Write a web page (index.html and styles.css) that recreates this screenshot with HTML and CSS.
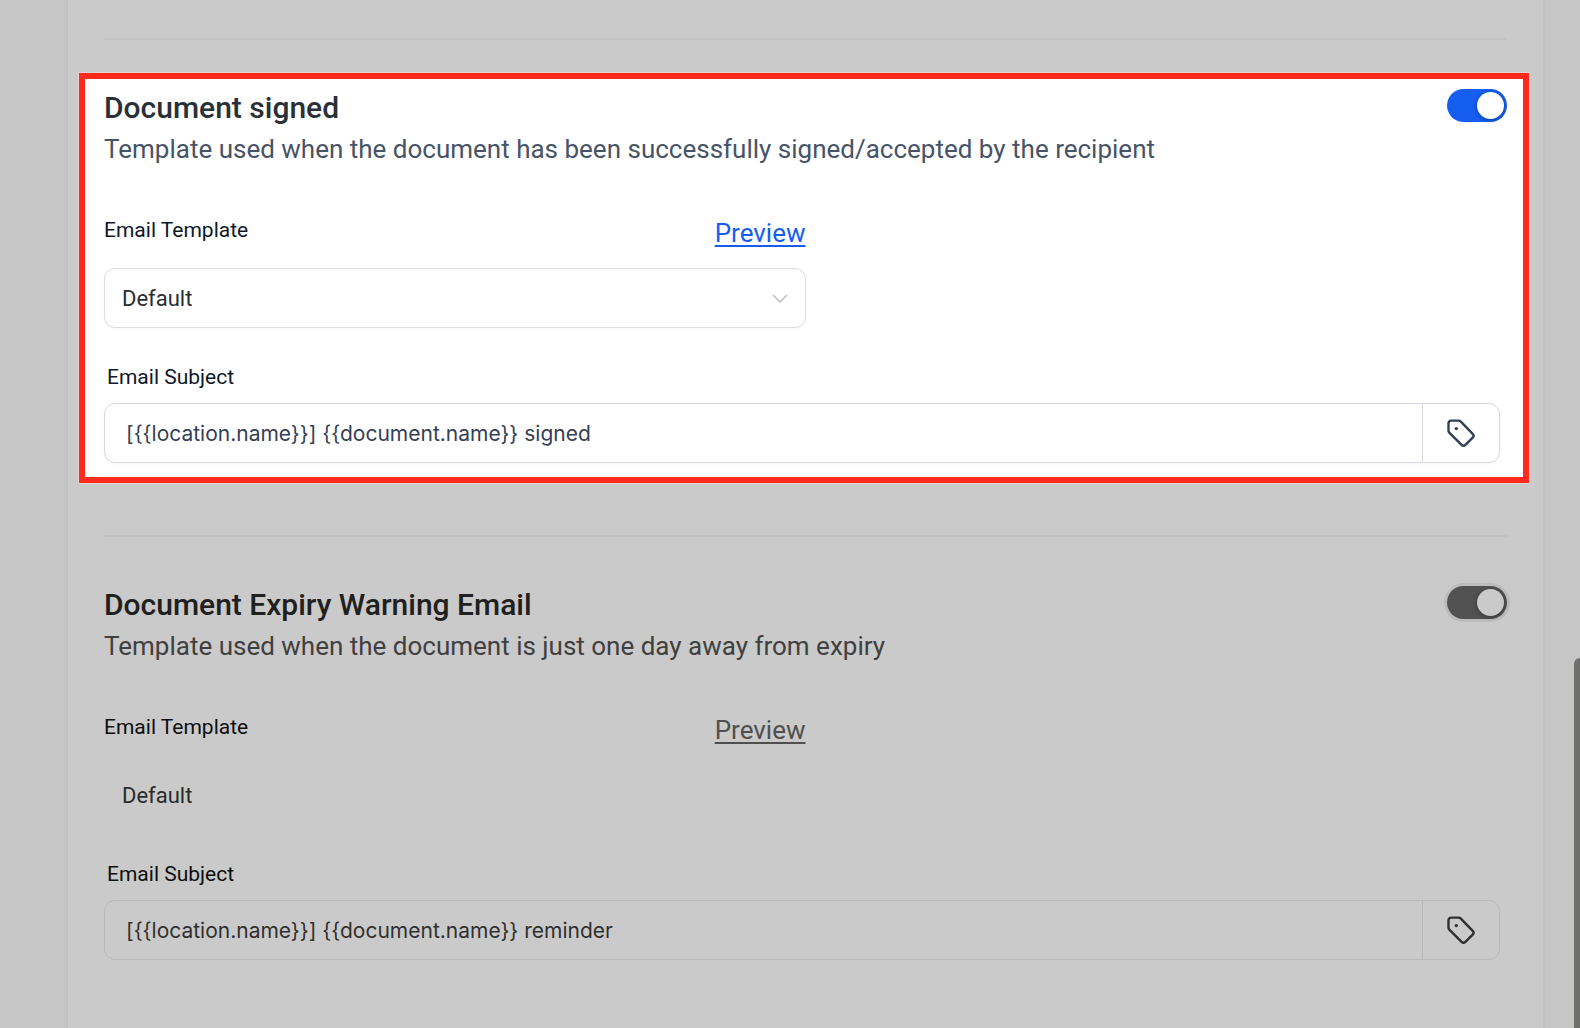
FILE: index.html
```html
<!DOCTYPE html>
<html lang="en">
<head>
    <meta charset="UTF-8">
    <meta name="viewport" content="width=device-width, initial-scale=1.0">
    <title>Email Notifications</title>
    <link rel="stylesheet" href="styles.css">
</head>
<body>
    <main class="card">
        <section class="panel active">
            <div class="panel-head">
                <div>
                    <h2>Document signed</h2>
                    <p class="desc">Template used when the document has been successfully signed/accepted by the recipient</p>
                </div>
                <input type="checkbox" class="switch" aria-label="Document signed" checked>
            </div>

            <div class="template">
                <div class="template-head">
                    <label for="signedTemplate">Email Template</label>
                    <a href="#" class="preview">Preview</a>
                </div>
                <div class="select-wrap">
                    <select id="signedTemplate">
                        <option>Default</option>
                    </select>
                    <svg class="chevron" viewBox="0 0 16 10" aria-hidden="true"><path d="M1 1l7 7 7-7"/></svg>
                </div>
            </div>

            <div class="subject">
                <label for="signedSubject">Email Subject</label>
                <div class="input-group">
                    <input type="text" id="signedSubject" value="[{{location.name}}] {{document.name}} signed">
                    <button type="button" aria-label="Insert custom value">
                        <svg class="tag" viewBox="0 0 28 28" aria-hidden="true">
                            <path d="M1.5 4.3v7.4c0 .8.3 1.4.8 1.9l12.3 12.3c1.1 1.1 2.7 1.1 3.8 0l7.3-7.3c1.1-1.1 1.1-2.7 0-3.8L13.6 2.4c-.5-.5-1.2-.8-1.9-.8H4.2C2.7 1.6 1.5 2.8 1.5 4.3z"/>
                            <circle cx="9.3" cy="9.6" r="1.7"/>
                        </svg>
                    </button>
                </div>
            </div>
        </section>

        <section class="panel">
            <div class="panel-head">
                <div>
                    <h2>Document Expiry Warning Email</h2>
                    <p class="desc">Template used when the document is just one day away from expiry</p>
                </div>
                <input type="checkbox" class="switch" aria-label="Document Expiry Warning Email" checked>
            </div>

            <div class="template">
                <div class="template-head">
                    <label for="expiryTemplate">Email Template</label>
                    <a href="#" class="preview">Preview</a>
                </div>
                <div class="select-wrap">
                    <select id="expiryTemplate">
                        <option>Default</option>
                    </select>
                </div>
            </div>

            <div class="subject">
                <label for="expirySubject">Email Subject</label>
                <div class="input-group">
                    <input type="text" id="expirySubject" value="[{{location.name}}] {{document.name}} reminder">
                    <button type="button" aria-label="Insert custom value">
                        <svg class="tag" viewBox="0 0 28 28" aria-hidden="true">
                            <path d="M1.5 4.3v7.4c0 .8.3 1.4.8 1.9l12.3 12.3c1.1 1.1 2.7 1.1 3.8 0l7.3-7.3c1.1-1.1 1.1-2.7 0-3.8L13.6 2.4c-.5-.5-1.2-.8-1.9-.8H4.2C2.7 1.6 1.5 2.8 1.5 4.3z"/>
                            <circle cx="9.3" cy="9.6" r="1.7"/>
                        </svg>
                    </button>
                </div>
            </div>
        </section>
    </main>
    <div class="scroll-thumb"></div>
</body>
</html>
```
FILE: styles.css
```css
:root {
    --font: Roboto, "Liberation Sans", sans-serif;
    --page-bg: #c6c6c6;
    --surface: #cacaca;
    --line: #c2c2c2;
    --title: #202020;
    --desc: #404040;
    --label: #0e0e0e;
    --value: #2b2b2b;
    --subject: #303030;
    --link: #4f4f4f;
    --field-line: #b8b8b8;
    --select-line: transparent;
    --switch: #515151;
    --switch-ring: #bcbcbc;
}
* {
    box-sizing: border-box;
}
body {
    margin: 0;
    padding: 0 35px 0 66px;
    font-family: var(--font);
    background-color: var(--page-bg);
}
.card {
    min-height: 100vh;
    padding: 38px 36px 0;
    background-color: var(--surface);
    border: solid var(--line);
    border-width: 0 2px;
}
.card::before, .active + .panel::before {
    content: "";
    display: block;
    height: 2px;
    background-color: var(--line);
}
.panel-head {
    display: flex;
    justify-content: space-between;
    align-items: flex-start;
    margin-bottom: 49px;
}
.active + .panel::before {
    margin-bottom: 49px;
}

/* highlighted panel */
.active {
    --surface: #ffffff;
    --title: #2a3037;
    --desc: #475467;
    --label: #101828;
    --value: #2a2e34;
    --subject: #344054;
    --link: #155eef;
    --field-line: #d5d8e0;
    --select-line: #dcdee5;
    --switch: #155eef;
    --switch-ring: transparent;
    margin: 33px -22px 52px -25px;
    padding: 10px 16px 14px 19px;
    background-color: #ffffff;
    border: 6px solid #ff2a1b;
    outline: 1px solid #e3d5d3;
}

h2 {
    margin: 0 0 3px;
    font-size: 30px;
    font-weight: 500;
    line-height: 38px;
    color: var(--title);
}
.desc {
    margin: 0;
    font-size: 26px;
    line-height: 38px;
    color: var(--desc);
}
label {
    font-size: 21px;
    line-height: 26px;
    color: var(--label);
}

.switch {
    appearance: none;
    flex: none;
    width: 60px;
    height: 33px;
    margin: 0;
    padding: 3px;
    border-radius: 17px;
    background-color: var(--switch);
    box-shadow: 0 0 0 3px var(--switch-ring);
    cursor: pointer;
}
.switch::before {
    content: "";
    display: block;
    width: 27px;
    height: 27px;
    border-radius: 50%;
    background-color: var(--surface);
    box-shadow: 0 1px 4px rgba(0, 0, 0, 0.35);
}
.switch:checked::before {
    margin-left: auto;
}

.template {
    width: 50%;
    margin-bottom: 36px;
}
.template-head {
    display: flex;
    justify-content: space-between;
    align-items: flex-start;
    margin-bottom: 19px;
}
.preview {
    font-size: 26px;
    line-height: 32px;
    color: var(--link);
    text-underline-offset: 3px;
    text-decoration-thickness: 2px;
}
.select-wrap {
    position: relative;
}
select {
    appearance: none;
    display: block;
    width: 100%;
    height: 60px;
    padding: 0 48px 0 17px;
    font-family: var(--font);
    font-size: 22px;
    color: var(--value);
    background-color: var(--surface);
    border: 1px solid var(--select-line);
    border-radius: 11px;
}
.active select, .active .input-group {
    box-shadow: 0 1px 3px rgba(16, 24, 40, 0.04);
}
.chevron {
    position: absolute;
    right: 18px;
    top: 26px;
    width: 16px;
    height: 10px;
    fill: none;
    stroke: #c2c2c2;
    stroke-width: 1.6;
    pointer-events: none;
}

.subject {
    margin-right: 7px;
}
.subject label {
    display: block;
    margin-bottom: 13px;
    padding-left: 3px;
}
.input-group {
    display: flex;
    height: 60px;
    border: 1px solid var(--field-line);
    border-radius: 11px;
}
.input-group input {
    flex: 1;
    min-width: 0;
    padding: 0 21px;
    font-family: Inter, var(--font);
    font-size: 21px;
    color: var(--subject);
    background: none;
    border: none;
}
.input-group button {
    display: flex;
    align-items: center;
    justify-content: center;
    width: 77px;
    padding: 0;
    background: none;
    border: none;
    border-left: 1px solid var(--field-line);
    cursor: pointer;
}
.tag {
    width: 28px;
    height: 28px;
    fill: none;
    stroke: var(--subject);
    stroke-width: 2.4;
}
.tag circle {
    fill: var(--subject);
    stroke: none;
}

.scroll-thumb {
    position: fixed;
    right: 0;
    top: 64vh;
    bottom: 0;
    width: 6px;
    background-color: #6e6e6d;
    border-top-left-radius: 6px;
}
```
